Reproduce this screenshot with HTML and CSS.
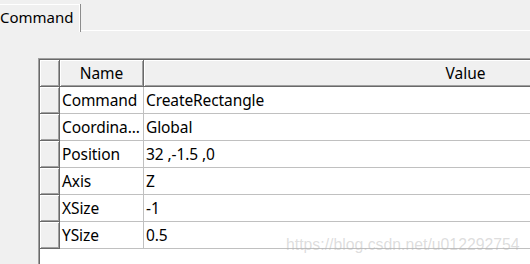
FILE: index.html
```html
<!DOCTYPE html>
<html lang="en">
<head>
    <meta charset="UTF-8">
    <title>Command Properties</title>
    <link rel="stylesheet" href="styles.css">
</head>
<body>
    <div class="tabs">
        <div class="tab">Command</div>
        <div class="tab-rest"></div>
    </div>
    <div class="pane">
        <div class="frame">
            <div class="grid">
                <div class="rh head"></div>
                <div class="hc">Name</div>
                <div class="hc">Value</div>

                <div class="rh"></div>
                <div class="cell">Command</div>
                <div class="cell">CreateRectangle</div>

                <div class="rh"></div>
                <div class="cell">Coordina...</div>
                <div class="cell">Global</div>

                <div class="rh"></div>
                <div class="cell">Position</div>
                <div class="cell">32 ,-1.5 ,0</div>

                <div class="rh"></div>
                <div class="cell">Axis</div>
                <div class="cell">Z</div>

                <div class="rh"></div>
                <div class="cell">XSize</div>
                <div class="cell">-1</div>

                <div class="rh"></div>
                <div class="cell">YSize</div>
                <div class="cell">0.5</div>
            </div>
        </div>
    </div>
    <div class="watermark">https://blog.csdn.net/u012292754</div>
</body>
</html>
```

FILE: styles.css
```css
body {
    margin: 0;
    width: 530px;
    height: 264px;
    overflow: hidden;
    position: relative;
    background-color: #f0f0f0;
    font-family: "Noto Sans", sans-serif;
    font-size: 15.5px;
    color: #000;
}
.tabs {
    display: flex;
    height: 32px;
    align-items: flex-end;
}
.tab {
    height: 27px;
    margin-left: -2px;
    padding: 0 5px 0 2px;
    line-height: 25px;
    font-size: 15px;
    border-top: 1px solid #fff;
    border-right: 1px solid #fff;
    box-shadow: 1px 0 0 #8c8c8c;
}
.tab-rest {
    flex: 1;
    margin-left: 1px;
    border-bottom: 1px solid #fff;
    margin-bottom: 1px;
}
.pane {
    padding: 26px 0 0 38px;
}
.frame {
    height: 206px;
    overflow: hidden;
    border-top: 1px solid #a0a0a0;
    border-left: 1px solid #a0a0a0;
}
.grid {
    height: 100%;
    display: grid;
    grid-template-columns: 20px 84px 644px;
    grid-auto-rows: 27px;
    align-content: start;
    background: #fff;
    border-top: 1px solid #696969;
    border-left: 1px solid #696969;
}
.rh, .hc {
    box-sizing: border-box;
    background: #f0f0f0;
    border-right: 1px solid #696969;
    border-bottom: 1px solid #696969;
    box-shadow: inset 1px 1px 0 #fff, inset -1px -1px 0 #a0a0a0;
}
.hc {
    display: flex;
    align-items: center;
    justify-content: center;
    padding-bottom: 1px;
}
.cell {
    box-sizing: border-box;
    padding-left: 2px;
    line-height: 26px;
    letter-spacing: -0.1px;
    border-right: 1px solid #c0c0c0;
    border-bottom: 1px solid #c0c0c0;
    white-space: nowrap;
    overflow: hidden;
}
.watermark {
    position: absolute;
    left: 286px;
    top: 236px;
    font-family: "Liberation Sans", sans-serif;
    font-size: 15.8px;
    color: rgba(180, 180, 180, 0.45);
}
```
